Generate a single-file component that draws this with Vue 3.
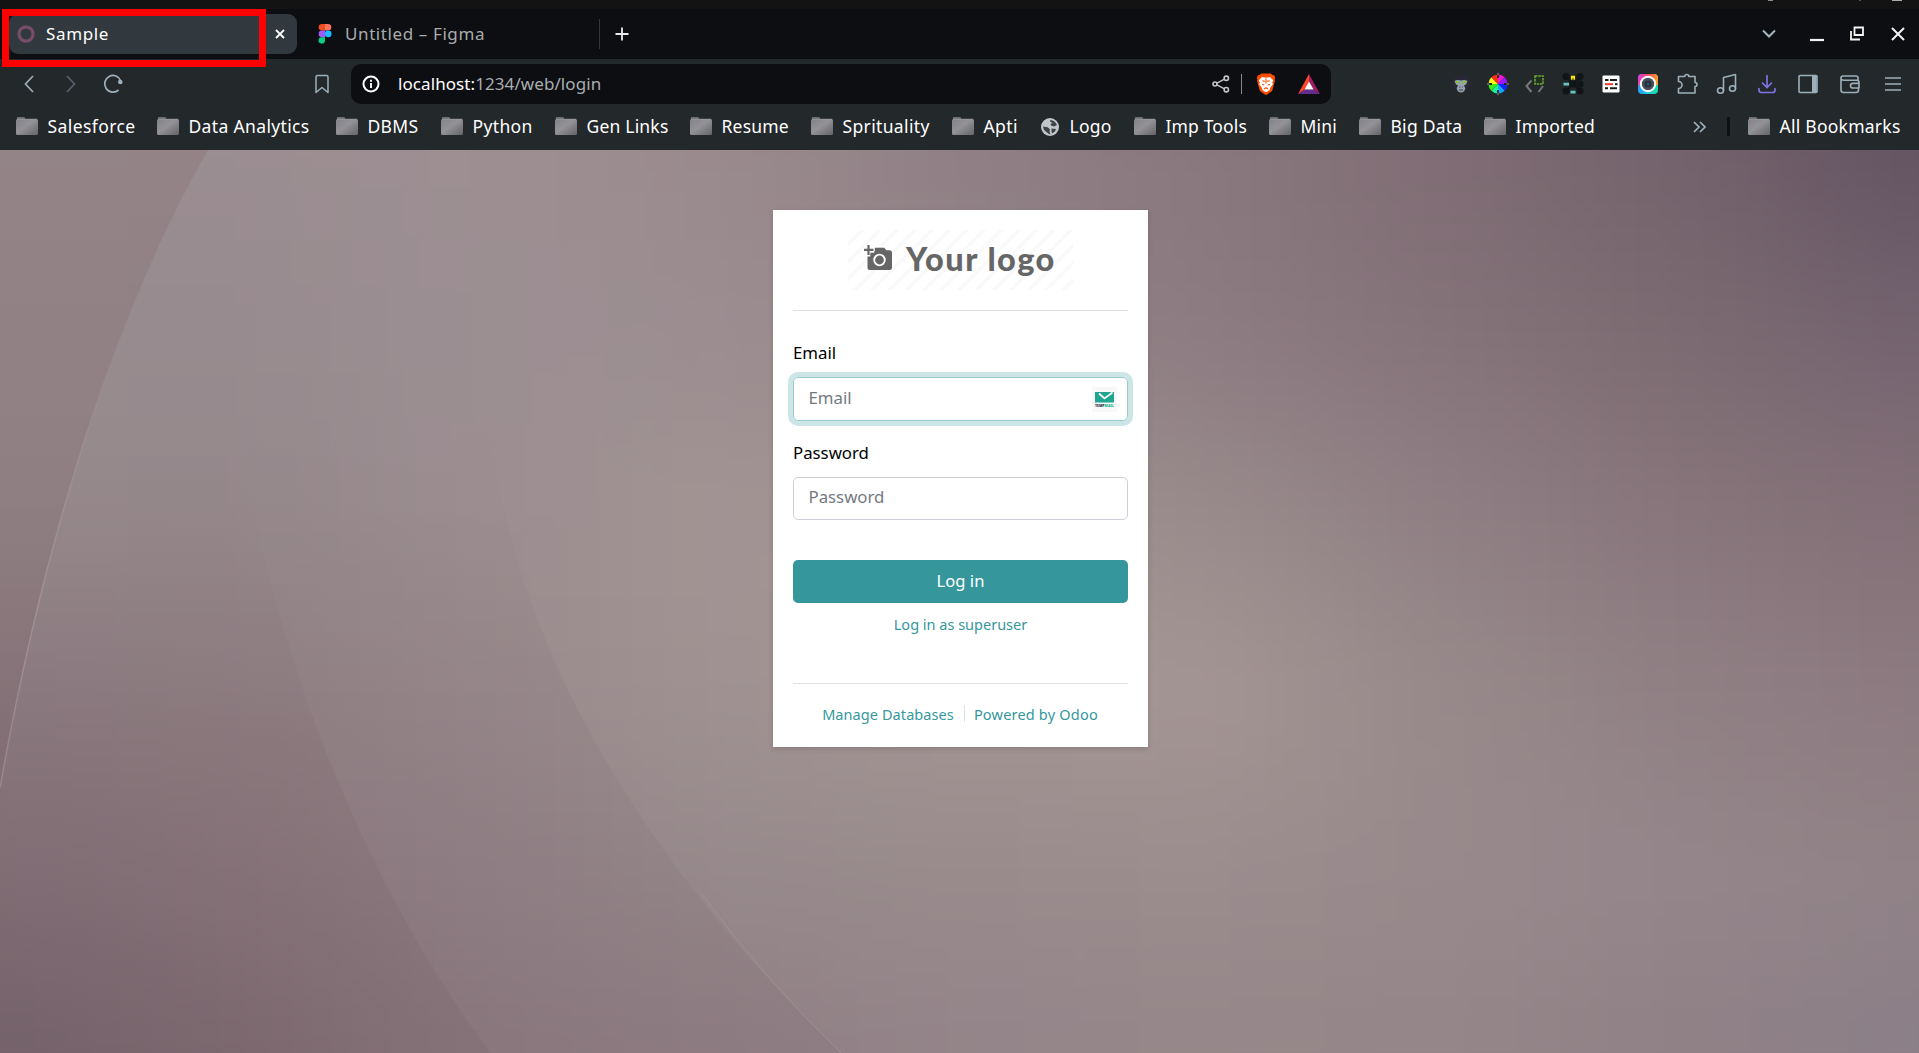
<script setup>
const bookmarks = [
  { name: 'Salesforce', width: 141, track: 0.42 },
  { name: 'Data Analytics', width: 179, track: 0.35 },
  { name: 'DBMS', width: 105, track: 0.3 },
  { name: 'Python', width: 114, track: 0.35 },
  { name: 'Gen Links', width: 135, track: 0.2 },
  { name: 'Resume', width: 121, track: 0.2 },
  { name: 'Sprituality', width: 141, track: 0.35 },
  { name: 'Apti', width: 88, track: 0.4 },
  { name: 'Logo', width: 94, globe: true, track: 0.25 },
  { name: 'Imp Tools', width: 135, track: 0.15 },
  { name: 'Mini', width: 90, track: 0.15 },
  { name: 'Big Data', width: 125, track: 0.25 },
  { name: 'Imported', width: 130, track: 0.2 },
]

const line = 'fill="none" stroke="#9db0ba" stroke-width="1.6" stroke-linejoin="round" stroke-linecap="round"'

const extensions = [
  { id: 'gorilla', width: 37, art: '<circle cx="12" cy="11.5" r="8.8" fill="#2b2738"/><path d="M12 8.500q4-1 6.500.5l-1.500 3.500-2 .8 1.300 3.200q-1 4-4.300 4t-4.300-4L9 13.300l-2-.8L5.500 9q2.500-1.500 6.500-.5z" fill="#93a4ac"/><path d="M6.500 10q2.500-1 4 1.200M17.500 10q-2.500-1-4 1.200" stroke="#86c21f" stroke-width="1.500" fill="none"/><path d="M10.300 15h1M12.700 15h1M10 18h4" stroke="#354049" stroke-width="1.100"/>' },
  { id: 'wheel', width: 37.5, art: '<path d="M12 12V2.500a9.500 9.500 0 0 1 6.700 2.800z" fill="#f219c9"/><path d="M12 12l6.700-6.700A9.500 9.500 0 0 1 21.500 12z" fill="#9a18ff"/><path d="M12 12h9.500a9.500 9.500 0 0 1-2.800 6.700z" fill="#1426ff"/><path d="M12 12l6.700 6.700A9.500 9.500 0 0 1 12 21.500z" fill="#15a7ff"/><path d="M12 12v9.500a9.500 9.500 0 0 1-6.700-2.800z" fill="#19f09a"/><path d="M12 12l-6.700 6.700A9.500 9.500 0 0 1 2.500 12z" fill="#35ed17"/><path d="M12 12H2.500a9.500 9.500 0 0 1 2.800-6.700z" fill="#fff51a"/><path d="M12 12L5.300 5.300A9.500 9.500 0 0 1 12 2.500z" fill="#ff2d15"/><path d="M12 1v5M12 18v5M1.500 12H6M18 12h4.500" stroke="#222" stroke-width="1.800"/><path d="M12 .8v2.500M12 20.700v2.500M1 12h2.500M20.500 12h2.500" stroke="#bbb" stroke-width=".8"/>' },
  { id: 'code', width: 37.5, art: '<path d="M8.500 8.500L3.500 14l5 6M20 14l-4.500 6" fill="none" stroke="#777" stroke-width="2"/><rect x="12" y="4" width="8" height="8" fill="#20321f" stroke="#6eaa35" stroke-width="1.500" stroke-dasharray="2.500 .8"/>' },
  { id: 'nodes', width: 38, art: '<g fill="#111517"><circle cx="5" cy="4.500" r="3.600"/><circle cx="19" cy="4.500" r="3.600"/><circle cx="12" cy="12" r="3.600"/><circle cx="19" cy="12" r="3.600"/><circle cx="5" cy="19" r="3.600"/><circle cx="19" cy="19" r="3.600"/></g><path d="M5 5l14 14M5 19L19 5" stroke="#111517" stroke-width="2"/><path d="M10 3.800h4v4h-1.500v-1.500h-1V7.800H10z" fill="#ffe600"/><path d="M2.500 10.700h5.500v2.800H2.500zM9.500 18.700h5v2.800h-5z" fill="#68c5bd"/>' },
  { id: 'reader', width: 37.5, art: '<rect x="3.500" y="3.500" width="17" height="17" rx="1" fill="#fff"/><path d="M6 8h3.500M11 8h7M6 16.300h3M11 16.300h7" stroke="#191b1d" stroke-width="2"/><path d="M6 12.200h8" stroke="#f4372b" stroke-width="2"/><path d="M16 12.200h2.500" stroke="#191b1d" stroke-width="2"/>' },
  { id: 'camera', width: 37.5, art: '<defs><linearGradient id="cam" x1="0" y1="0" x2="1" y2=".2"><stop offset="0" stop-color="#2f8bf5"/><stop offset=".6" stop-color="#18c6ef"/><stop offset="1" stop-color="#17dbb0"/></linearGradient><linearGradient id="cam2" x1="0" y1="0" x2="1" y2=".2"><stop offset="0" stop-color="#d63cf1"/><stop offset=".5" stop-color="#f5455f"/><stop offset="1" stop-color="#ff9a28"/></linearGradient></defs><rect x="2" y="2" width="20" height="20" rx="4" fill="url(#cam)"/><path d="M2 13V6a4 4 0 0 1 4-4h12a4 4 0 0 1 4 4v7z" fill="url(#cam2)"/><circle cx="12" cy="12" r="8.200" fill="#fff"/><circle cx="12" cy="12" r="6.200" fill="#464e5b"/><circle cx="12" cy="12" r="3.600" fill="#26313e"/><circle cx="12" cy="12" r="1" fill="#32707c"/>' },
  { id: 'puzzle', width: 39, art: `<path ${line} d="M3.500 4.500H9.800a2 2 0 1 1 4 0H20V10.500a2 2 0 1 1 0 4V21H3.500V16.500a3.300 3.300 0 0 0 0-7z"/>` },
  { id: 'music', width: 41, art: `<g ${line}><ellipse cx="5.500" cy="18.500" rx="3" ry="2.800"/><ellipse cx="17.500" cy="16.500" rx="3" ry="2.800"/><path d="M8.500 18.500V5.500l12-3v14"/></g>` },
  { id: 'download', width: 40.5, art: '<path d="M12 3.500v12M7.500 11l4.500 4.500 4.500-4.500M4 16.500v1.500q0 2.500 2.500 2.500h11q2.500 0 2.500-2.500v-1.500" fill="none" stroke="#7c73e6" stroke-width="1.700" stroke-linecap="round"/>' },
  { id: 'panel', width: 41.5, art: `<rect ${line} x="3" y="3.500" width="18" height="17" rx="1"/><path d="M16 3.500h4.500v17H16z" fill="#9db0ba"/>` },
  { id: 'wallet', width: 42.5, art: `<path ${line} d="M20 8V6q0-2-2-2H5Q3 4 3 6v12q0 2.500 2.500 2.500h12.500q2.500 0 2.500-2.500v-1M3 7q1 1.300 3 1.300h12.500q2.500 0 2.500 2V16h-6q-2.500 0-2.500-2.300t2.500-2.300H21"/>` },
  { id: 'menu', width: 42, art: '<path d="M4 6h16M4 12h16M4 18h16" stroke="#9db0ba" stroke-width="1.500"/>' },
]

// Wallpaper colours on a 240 x 180 lattice, blurred into one another.
const mesh = [
  ['#9b8e91', '#9b8d91', '#9d8f92', '#9a8a8d', '#8f7f85', '#89787e', '#7f6c74', '#73626b', '#625260'],
  ['#988b8f', '#978b8f', '#9c8f93', '#9b8d90', '#94868a', '#8c7b81', '#85737a', '#7b6a70', '#736370'],
  ['#978a8c', '#96898c', '#9c8e91', '#a39594', '#a09291', '#998b8c', '#8f7f84', '#87757b', '#836f77'],
  ['#918287', '#938386', '#998a8d', '#a09292', '#a49694', '#a59794', '#988a8b', '#908084', '#8c7a80'],
  ['#86747b', '#8c797f', '#928287', '#978a8c', '#998b8c', '#9b8c8e', '#988a8c', '#94868b', '#918387'],
  ['#77666f', '#806d73', '#8c7a80', '#8f7e83', '#93848a', '#958689', '#948589', '#8f8085', '#8a7e87'],
]
const clamp = (v, max) => Math.min(Math.max(v, 0), max)
const cells = []
for (let r = -1; r <= 6; r++) {
  for (let c = -1; c <= 9; c++) {
    cells.push({ key: `${r}:${c}`, x: c * 240 - 120, y: 60 + r * 180, fill: mesh[clamp(r, 5)][clamp(c, 8)] })
  }
}
</script>

<template>
  <div class="screen">
    <div class="desktop-bar"><i class="tick t1"></i><i class="tick t2"></i><i class="tick t3"></i></div>

    <header class="tabs">
      <div class="tab active">
        <svg class="ring" width="20" height="20" viewBox="0 0 20 20"><ellipse cx="10" cy="10" rx="7" ry="7.200" fill="none" stroke="#774d6b" stroke-width="3.200" /></svg>
        <span class="tab-title">Sample</span>
        <svg width="12" height="12" viewBox="0 0 12 12"><path d="M2 2l8 8M10 2l-8 8" stroke="#fff" stroke-width="1.800" /></svg>
      </div>
      <div class="tab idle">
        <svg width="14" height="20" viewBox="0 0 14 20">
          <path d="M4 0h3v6.600H4A3.300 3.300 0 0 1 4 0z" fill="#f24e1e" />
          <path d="M7 0h3a3.300 3.300 0 0 1 0 6.600H7z" fill="#ff7262" />
          <path d="M4 6.600h3v6.600H4a3.300 3.300 0 0 1 0-6.600z" fill="#a259ff" />
          <circle cx="10.200" cy="9.900" r="3.300" fill="#1abcfe" />
          <path d="M4 13.200h3v3.300a3.200 3.200 0 1 1-3-3.300z" fill="#0acf83" />
        </svg>
        <span class="tab-title">Untitled – Figma</span>
      </div>
      <svg class="plus" width="16" height="16" viewBox="0 0 16 16"><path d="M8 1.500v13M1.500 8h13" stroke="#e9ebed" stroke-width="1.800" /></svg>
      <div class="window-controls">
        <svg class="chev" width="14" height="10" viewBox="0 0 14 10"><path d="M1 1.500l6 6 6-6" fill="none" stroke="#a6b5be" stroke-width="2" /></svg>
        <svg class="min" width="14" height="16" viewBox="0 0 14 16"><path d="M0 14h14" stroke="#f3f3f3" stroke-width="2.200" /></svg>
        <svg class="max" width="16" height="16" viewBox="0 0 16 16"><path d="M5.500 1.500h8.500v7.500H5.500zM2 5v8.500h9" fill="none" stroke="#f3f3f3" stroke-width="1.800" /></svg>
        <svg width="14" height="14" viewBox="0 0 14 14"><path d="M1 1l12 12M13 1L1 13" stroke="#f3f3f3" stroke-width="2" /></svg>
      </div>
      <div class="highlight"></div>
    </header>

    <nav class="toolbar">
      <svg class="back" width="12" height="20" viewBox="0 0 12 20"><path d="M10 2L2.500 10 10 18" fill="none" stroke="#9db0ba" stroke-width="1.700" /></svg>
      <svg class="forward" width="12" height="20" viewBox="0 0 12 20"><path d="M2 2l7.500 8L2 18" fill="none" stroke="#56616a" stroke-width="1.700" /></svg>
      <svg class="reload" width="22" height="22" viewBox="0 0 22 22"><path d="M16.500 17A8.300 8.300 0 1 1 18.800 8" fill="none" stroke="#9db0ba" stroke-width="1.700" /><circle cx="18.300" cy="9" r="2.300" fill="#9db0ba" /></svg>
      <svg class="mark" width="16" height="20" viewBox="0 0 16 20"><path d="M2 3q0-1.500 1.500-1.500h9Q14 1.500 14 3v15.500l-6-5-6 5z" fill="none" stroke="#9db0ba" stroke-width="1.500" stroke-linejoin="round" /></svg>
      <div class="address">
        <svg class="info" width="18" height="18" viewBox="0 0 18 18"><circle cx="9" cy="9" r="7.500" fill="none" stroke="#fff" stroke-width="2" /><path d="M9 8v5M9 4.700v2" stroke="#fff" stroke-width="1.900" /></svg>
        <span class="url"><b>localhost:</b>1234/web/login</span>
        <svg class="share" width="18" height="18" viewBox="0 0 18 18"><path d="M4.500 8.300l7.500-4M4.500 9.700l7.500 4" stroke="#c3c7ca" stroke-width="1.400" /><g fill="none" stroke="#c3c7ca" stroke-width="1.600"><circle cx="3" cy="9" r="2" /><circle cx="14.300" cy="3.300" r="2.200" /><circle cx="14.300" cy="14.700" r="2.200" /></g></svg>
        <i class="bar"></i>
        <svg class="brave" width="20" height="24" viewBox="0 0 20 24">
          <path d="M5.500 1.500h9L16.500 3l1.600.3L19.300 6l-.7 1.500.3 1.500-2.800 10L10 23.300 3.900 19 1.100 9l.3-1.500L.7 6l1.200-2.700L3.500 3z" fill="#ff4d00" />
          <path d="M6 5l4 .7L14 5l3.200 3.200-1 2.500.8 1.500-2.500 3-1 3L10 20.200 6.500 18.200l-1-3L3 12.200l.8-1.500-1-2.500z" fill="#fff" />
          <path d="M10 6.500v5M6.300 8.800l2.500.6M13.700 8.800l-2.500.6M6 12.500l2.300.5M14 12.500l-2.300.5M8 17l2-1.300 2 1.300" fill="none" stroke="#ff4d00" stroke-width="1.100" />
        </svg>
        <svg class="bat" width="22" height="20" viewBox="0 0 22 20"><path d="M11 0L0 20l7-4.500L11 8z" fill="#ff4724" /><path d="M11 0l11 20-7-4.500L11 8z" fill="#9e1f63" /><path d="M0 20h22l-7-4.500H7z" fill="#662d91" /><path d="M11 7.500l4.500 8h-9z" fill="#fff" /></svg>
      </div>
      <div class="extensions">
        <span v-for="e in extensions" :key="e.id" class="ext" :style="{ width: e.width + 'px' }">
          <svg width="24" height="24" viewBox="0 0 24 24" v-html="e.art"></svg>
        </span>
      </div>
    </nav>

    <nav class="bookmarks">
      <svg width="0" height="0" class="defs">
        <defs>
          <linearGradient id="folder" x1="0" y1="0" x2="1" y2="1"><stop offset="0" stop-color="#828288" /><stop offset=".45" stop-color="#929297" /><stop offset="1" stop-color="#646467" /></linearGradient>
        </defs>
      </svg>
      <div v-for="b in bookmarks" :key="b.name" class="bookmark" :style="{ width: b.width + 'px', letterSpacing: b.track + 'px' }">
        <svg v-if="b.globe" class="globe" width="18" height="18" viewBox="0 0 18 18"><circle cx="9" cy="9" r="9" fill="#c3c6c9" /><path d="M9.500 2q4.500.5 6.500 5l-3 1.500-3-1-.5-1.500 2-1-2.500-1.500zM2 8.500l4.500.7 2.500 2-.5 2 1 3.300-1.500-.5-2-1.500-3-2.500zM10.500 10.500l4.500.5-1 2.500-3 2-.5-2z" fill="#3a4348" /></svg>
        <svg v-else class="folder" width="22" height="18" viewBox="0 0 22 18"><path d="M1 0h7.500l1 3H1z" fill="#6d6d72" /><rect y="2" width="22" height="16" rx="1.500" fill="url(#folder)" /><path d="M1 2.200h20" stroke="#a1a1a5" stroke-width=".7" /></svg>
        <span>{{ b.name }}</span>
      </div>
      <svg class="more" width="13" height="12" viewBox="0 0 13 12"><path d="M1 1l5 5-5 5M7 1l5 5-5 5" fill="none" stroke="#9db0ba" stroke-width="1.700" /></svg>
      <i class="split"></i>
      <div class="bookmark">
        <svg class="folder" width="22" height="18" viewBox="0 0 22 18"><path d="M1 0h7.500l1 3H1z" fill="#6d6d72" /><rect y="2" width="22" height="16" rx="1.500" fill="url(#folder)" /><path d="M1 2.200h20" stroke="#a1a1a5" stroke-width=".7" /></svg>
        <span>All Bookmarks</span>
      </div>
    </nav>

    <main class="page">
      <svg class="backdrop" width="1919" height="903" viewBox="0 150 1919 903">
        <defs>
          <filter id="soften" x="-400" y="-300" width="2800" height="1800" filterUnits="userSpaceOnUse" color-interpolation-filters="sRGB"><feGaussianBlur stdDeviation="90 75" /></filter>
          <linearGradient id="veil" x1="0" y1="443" x2="0" y2="740" gradientUnits="userSpaceOnUse"><stop offset="0" stop-color="#5f4650" stop-opacity="0" /><stop offset="1" stop-color="#5f4650" stop-opacity=".16" /></linearGradient>
          <linearGradient id="veil2" x1="0" y1="420" x2="0" y2="700" gradientUnits="userSpaceOnUse"><stop offset="0" stop-color="#6a5660" stop-opacity="0" /><stop offset="1" stop-color="#6a5660" stop-opacity=".1" /></linearGradient>
          <linearGradient id="rim" x1="0" y1="330" x2="0" y2="600" gradientUnits="userSpaceOnUse"><stop offset="0" stop-color="#b9abb0" stop-opacity="0" /><stop offset="1" stop-color="#b9abb0" stop-opacity=".55" /></linearGradient>
        </defs>
        <g filter="url(#soften)">
          <rect v-for="c in cells" :key="c.key" :x="c.x" :y="c.y" width="241" height="181" :fill="c.fill" />
        </g>
        <path d="M208 150C110 320 40 560 0 788V150z" fill="#6e5459" fill-opacity=".17" />
        <path d="M208 150C110 320 40 560 0 788" fill="none" stroke="url(#rim)" stroke-width="1.400" />
        <path d="M242 438C262 600 345 860 491 1053H0V438z" fill="url(#veil)" />
        <path d="M489 420C512 650 650 870 841 1053H491C345 860 262 600 242 438V420z" fill="url(#veil2)" />
        <path d="M700 892Q768 983 841 1053" fill="none" stroke="#b3a5aa" stroke-opacity=".35" />
      </svg>

      <section class="card">
        <div class="logo">
          <svg width="29" height="28" viewBox="0 0 29 28">
            <path d="M4.500 1v10M0 5.800h9.500" stroke="#666" stroke-width="2.200" />
            <path d="M10.800 6.500V3.700h9.400l2.300 2.500h3q2.500 0 2.500 2.500v14.800q0 2.500-2.500 2.500H6q-2.500 0-2.500-2.500V12.600h2.800V8.800H10z" fill="#666" />
            <circle cx="15.500" cy="16" r="5.300" fill="#666" stroke="#fff" stroke-width="1.800" />
          </svg>
          <span>Your logo</span>
        </div>
        <form class="form" @submit.prevent>
          <label for="email">Email</label>
          <div class="field focused">
            <input id="email" type="text" placeholder="Email" />
            <svg class="tempmail" width="25" height="25" viewBox="0 0 25 25"><rect width="25" height="25" rx="2" fill="#f8f8f9" /><path d="M3 5h19v10.500H3z" fill="#20a590" /><path d="M7 6.500l5.500 5L20.500 5.500" fill="none" stroke="#fff" stroke-width="1.700" /><text x="3" y="20" font-size="4" font-weight="900" textLength="19" lengthAdjust="spacingAndGlyphs"><tspan fill="#263248">TEMP</tspan><tspan fill="#1db793">MAIL</tspan></text></svg>
          </div>
          <label for="password">Password</label>
          <div class="field secret"><input id="password" type="password" placeholder="Password" /></div>
          <button type="submit">Log in</button>
          <a class="superuser">Log in as superuser</a>
        </form>
        <footer><a>Manage Databases</a><a class="odoo">Powered by Odoo</a></footer>
      </section>
    </main>
  </div>
</template>

<style>
body { margin: 0; overflow: hidden; }
</style>

<style scoped>
* { box-sizing: border-box; }
.screen { width: 1919px; height: 1053px; overflow: hidden; display: flex; flex-direction: column; font-family: "Noto Sans", sans-serif; background: #23282b; }
svg { display: block; flex: none; }

.desktop-bar { height: 9px; flex: none; background: #131313; display: flex; padding-left: 1768px; }
.tick { height: 1px; background: #8a8a8a; }
.t1 { width: 5px; }
.t2 { width: 2px; margin-left: 86px; background: #555; }
.t3 { width: 10px; margin-left: 31px; background: #aaa; }

.tabs { position: relative; height: 50px; flex: none; background: #0d0e12; display: flex; align-items: center; }
.tab { display: flex; align-items: center; height: 40px; color: #fff; font-size: 17px; }
.tab-title { padding-bottom: 2px; }
.active { width: 288px; margin-left: 9px; padding-left: 7px; background: #31393e; border-radius: 9px; }
.active .tab-title { margin-left: 10px; width: 228px; letter-spacing: 0.65px; }
.idle { width: 303px; padding-left: 21px; color: #a9abad; position: relative; }
.idle::after { content: ""; position: absolute; right: 0; top: 5px; height: 30px; width: 1px; background: #34373b; }
.idle .tab-title { margin-left: 13px; letter-spacing: 0.6px; }
.plus { margin-left: 14px; }
.window-controls { margin-left: auto; margin-right: 14px; display: flex; align-items: center; }
.chev { margin-right: 34px; }
.min { margin-right: 25px; }
.max { margin-right: 26px; }
.highlight { position: absolute; left: 2px; top: 0; width: 264px; height: 58px; border: 7px solid #f00; z-index: 2; }

.toolbar { height: 50px; flex: none; display: flex; align-items: center; }
.back { margin-left: 23px; }
.forward { margin-left: 30px; }
.reload { margin-left: 25px; }
.mark { margin-left: 190px; }
.address { width: 980px; height: 40px; margin-left: 21px; border-radius: 10px; background: #0d0e12; display: flex; align-items: center; }
.info { margin-left: 11px; }
.url { width: 814px; margin-left: 18px; padding-bottom: 2px; font-size: 17px; letter-spacing: 0.08px; color: #a9adb1; }
.url b { font-weight: 400; color: #fff; }
.bar { width: 1px; height: 20px; background: #85898c; margin-left: 11px; }
.brave { margin-left: 14px; }
.bat { margin-left: 22px; }
.extensions { display: flex; margin-left: 111px; }
.ext { display: flex; justify-content: center; }
.ext svg { overflow: visible; }

.bookmarks { height: 41px; flex: none; display: flex; align-items: center; padding: 0 0 8px 16px; color: #fff; font-size: 17.5px; letter-spacing: 0.25px; white-space: nowrap; }
.defs { position: absolute; }
.bookmark { display: flex; align-items: center; flex: none; }
.folder { margin: 0 9.5px 0 0; }
.globe { margin: 2px 11px 0 0.5px; }
.more { margin: 2px 0 0 79px; }
.split { width: 3px; height: 19px; background: #0e1013; margin: 2px 18px 0 21px; }

.page { position: relative; flex: 1; display: flex; justify-content: center; align-items: flex-start; padding: 60px 0 0 2px; background: #908187; overflow: hidden; }
.backdrop { position: absolute; left: 0; top: 0; }

.card { position: relative; width: 375px; height: 537px; background: #fff; padding: 20px; display: flex; flex-direction: column; box-shadow: 0 2px 5px rgba(60, 45, 52, 0.2); }
.logo { width: 225px; height: 60px; flex: none; align-self: center; display: flex; align-items: center; padding-left: 16px; background: repeating-linear-gradient(135deg, #fff 0 8px, #f9f9f9 9px 11.3px, #fff 12.3px); }
.logo svg { margin-top: -4px; }
.logo span { margin-left: 13px; font: 900 32.5px/60px Lato, sans-serif; letter-spacing: 1.45px; color: #666; white-space: nowrap; margin-top: -2px; }
.form { margin-top: 20px; padding-top: 29px; border-top: 1px solid #dee2e6; height: 373px; display: flex; flex-direction: column; }
label { font-size: 16.8px; line-height: 26px; height: 37px; color: #000; }
.field { height: 43px; flex: none; border: 1px solid #ced0d9; border-radius: 5px; display: flex; align-items: center; margin-bottom: 20px; }
.focused { height: 44px; border-color: #9acbce; box-shadow: 0 0 0 5px #cce5e7; margin-bottom: 19px; }
input { flex: 1; min-width: 0; border: 0; outline: 0; background: none; padding: 0 0 3px 14.5px; font: 16.8px "Noto Sans", sans-serif; color: #495057; }
.secret input { padding-bottom: 5px; }
input::placeholder { color: #74797f; opacity: 1; }
.tempmail { margin-right: 10px; }
button { height: 43px; flex: none; margin-top: 20px; border: 0; border-radius: 5px; background: #35979c; color: #fff; font: 16.6px "Noto Sans", sans-serif; padding: 0 0 2px; }
a { color: #35979c; font-size: 14.5px; line-height: 22px; }
.superuser { align-self: center; margin-top: 10px; }
footer { border-top: 1px solid #dee2e6; display: flex; justify-content: center; align-items: flex-start; padding: 19px 1px 0 0; letter-spacing: 0.08px; }
.odoo { position: relative; margin-left: 20px; letter-spacing: 0.2px; }
.odoo::before { content: ""; position: absolute; left: -10px; top: 2px; height: 17px; width: 1px; background: #dee2e6; }
</style>
